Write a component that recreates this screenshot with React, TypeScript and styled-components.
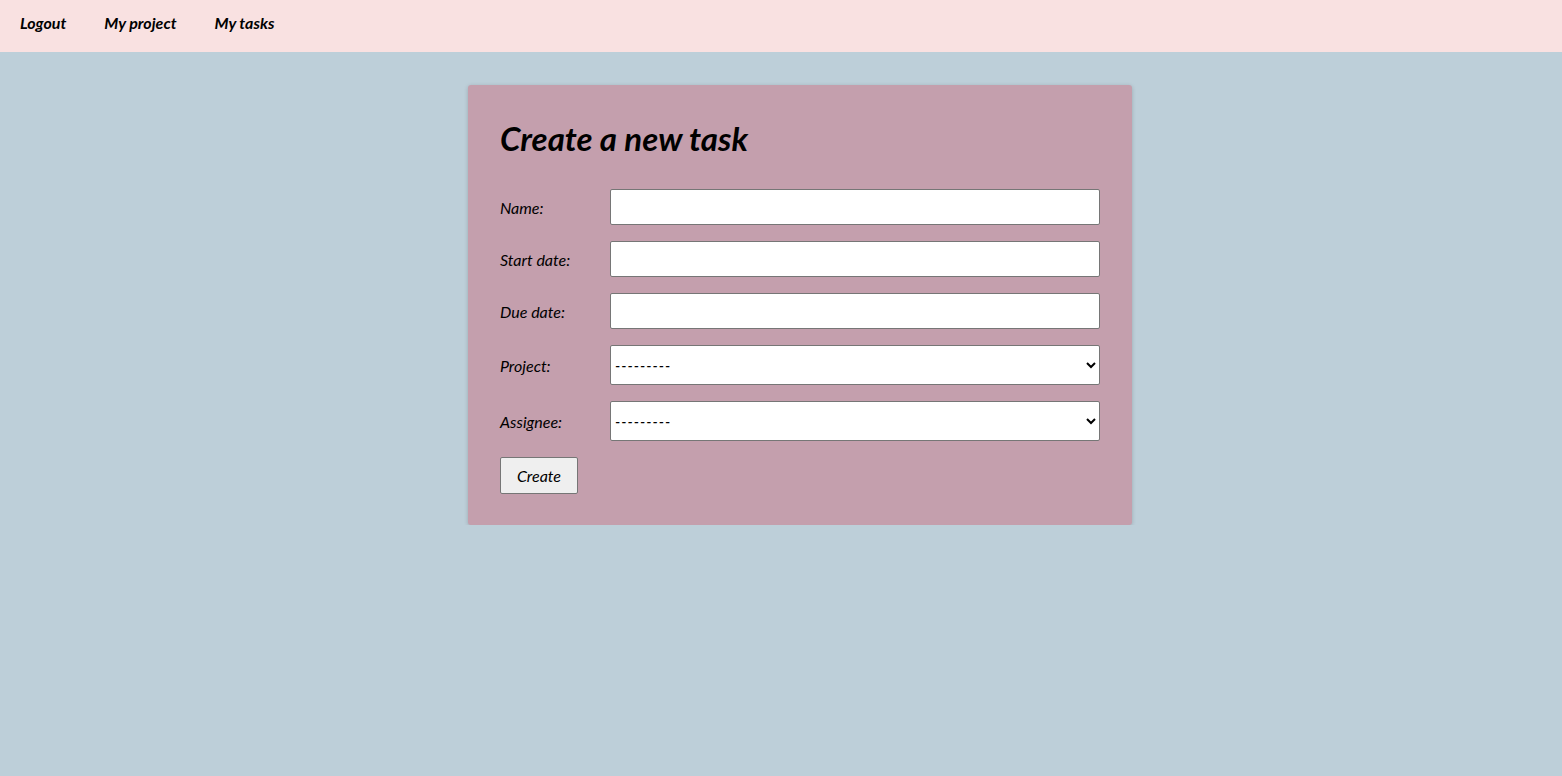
import styled, { createGlobalStyle } from "styled-components";

const GlobalStyle = createGlobalStyle`
  body {
    margin: 0;
    background: #bdcfd9;
    font-family: Lato, "Open Sans", sans-serif;
    font-style: italic;
    color: #000;
  }
`;

const Nav = styled.nav`
  display: flex;
  align-items: center;
  gap: 38px;
  height: 52px;
  padding: 0 20px;
  box-sizing: border-box;
  background: #f9e1e1;
`;

const NavLink = styled.a`
  font-size: 16px;
  font-weight: 700;
  color: #000;
  text-decoration: none;
  margin-top: -8px;
  cursor: pointer;
`;

const Main = styled.main`
  display: flex;
  justify-content: center;
  padding: 33px 0 0 38px;
`;

const Card = styled.section`
  width: 664px;
  box-sizing: border-box;
  padding: 34px 32px 31px;
  background: #c49fad;
  border-radius: 3px;
  box-shadow: 0 1px 4px rgba(0, 0, 0, 0.18);
`;

const Title = styled.h1`
  margin: 0 0 32px;
  font-size: 33px;
  line-height: 38px;
  font-weight: 700;
`;

const Form = styled.form`
  display: grid;
  grid-template-columns: 110px 1fr;
  row-gap: 16px;
  align-items: center;
`;

const Label = styled.label`
  font-size: 16px;
`;

const Input = styled.input`
  height: 36px;
  box-sizing: border-box;
  border: 1px solid #767676;
  border-radius: 2px;
  background: #fff;
  font: inherit;
`;

const Select = styled.select`
  height: 40px;
  box-sizing: border-box;
  border: 1px solid #767676;
  border-radius: 2px;
  background: #fff;
  font-family: inherit;
  font-style: italic;
  font-size: 15px;
  letter-spacing: 1px;
  color: #000;
  padding: 0 4px 0 0;
`;

const Button = styled.button`
  grid-column: 1;
  justify-self: start;
  width: 78px;
  height: 37px;
  border: 1px solid #767676;
  border-radius: 2px;
  background: #efefef;
  font-family: inherit;
  font-style: italic;
  font-size: 16px;
  color: #000;
`;

const fields = [
  { id: "name", label: "Name:" },
  { id: "start", label: "Start date:" },
  { id: "due", label: "Due date:" },
];

const selects = [
  { id: "project", label: "Project:" },
  { id: "assignee", label: "Assignee:" },
];

export default function App() {
  return (
    <>
      <GlobalStyle />
      <Nav>
        <NavLink>Logout</NavLink>
        <NavLink>My project</NavLink>
        <NavLink>My tasks</NavLink>
      </Nav>
      <Main>
        <Card>
          <Title>Create a new task</Title>
          <Form onSubmit={(e) => e.preventDefault()}>
            {fields.map((f) => [
              <Label key={f.id + "-label"} htmlFor={f.id}>
                {f.label}
              </Label>,
              <Input key={f.id} id={f.id} type="text" />,
            ])}
            {selects.map((s) => [
              <Label key={s.id + "-label"} htmlFor={s.id}>
                {s.label}
              </Label>,
              <Select key={s.id} id={s.id} defaultValue="">
                <option value="">---------</option>
              </Select>,
            ])}
            <Button type="submit">Create</Button>
          </Form>
        </Card>
      </Main>
    </>
  );
}
